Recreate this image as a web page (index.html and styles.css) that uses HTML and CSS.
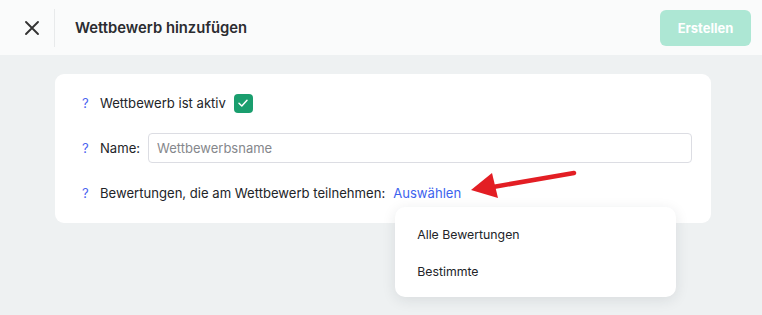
FILE: index.html
```html
<!doctype html>
<html lang="de">
  <head>
    <meta charset="UTF-8" />
    <meta name="viewport" content="width=device-width, initial-scale=1.0" />
    <title>Wettbewerb hinzufügen</title>
    <link rel="stylesheet" href="styles.css">
  </head>
  <body>
    <div class="top-bar">
      <div class="close-wrap">
        <button class="close-btn" aria-label="Schließen">
          <svg width="16" height="16" viewBox="0 0 16 16">
            <path d="M2 2 L14 14 M14 2 L2 14" stroke="#333" stroke-width="1.9" stroke-linecap="round" fill="none" />
          </svg>
        </button>
      </div>
      <div class="page-title">Wettbewerb hinzufügen</div>
      <button class="create-btn" disabled>Erstellen</button>
    </div>

    <div class="content">
      <div class="form-card">
        <div class="form-row">
          <span class="hint">?</span>
          <span class="label">Wettbewerb ist aktiv</span>
          <span class="checkbox">
            <svg width="12" height="12" viewBox="0 0 12 12">
              <path d="M2 6.3 L4.8 9 L10 3.2" stroke="#fff" stroke-width="1.5" stroke-linecap="round" stroke-linejoin="round" fill="none" />
            </svg>
          </span>
        </div>

        <div class="form-row">
          <span class="hint">?</span>
          <span class="label">Name:</span>
          <input class="text-input" type="text" placeholder="Wettbewerbsname" />
        </div>

        <div class="form-row">
          <span class="hint">?</span>
          <span class="label">Bewertungen, die am Wettbewerb teilnehmen:</span>
          <span class="picker">
            <a class="link" href="#">Auswählen</a>
            <svg class="arrow" width="106" height="32" viewBox="0 0 106 32">
              <path d="M103 4 L22 18" stroke="#e31e24" stroke-width="4.5" stroke-linecap="round" fill="none" />
              <path d="M0 21 L21 4 L27 29 Z" fill="#e31e24" />
            </svg>
            <div class="dropdown">
              <div class="dropdown-item">Alle Bewertungen</div>
              <div class="dropdown-item">Bestimmte</div>
            </div>
          </span>
        </div>
      </div>
    </div>
  </body>
</html>
```

FILE: styles.css
```css
body {
  margin: 0;
  font-family: 'Inter', 'Noto Sans', sans-serif;
  background-color: #eef1f2;
  color: #222428;
  height: 315px;
  overflow: hidden;
}

/* Top bar */
.top-bar {
  display: flex;
  align-items: center;
  height: 55px;
  background-color: #fafbfb;
}

.close-wrap {
  width: 55px;
  height: 38px;
  border-right: 1px solid #e8eaeb;
  box-sizing: border-box;
  display: flex;
  align-items: center;
  padding-left: 24px;
}

.close-btn {
  background: none;
  border: none;
  padding: 0;
  width: 16px;
  height: 16px;
  display: flex;
  cursor: pointer;
}

.page-title {
  margin-left: 20px;
  font-size: 14.8px;
  font-weight: 600;
  color: #2a2c30;
}

.create-btn {
  margin-left: auto;
  margin-right: 11px;
  width: 91px;
  height: 36px;
  border: none;
  border-radius: 6px;
  background-color: #ade7d4;
  color: #fff;
  font-family: inherit;
  font-size: 13px;
  font-weight: 700;
}

/* Content */
.content {
  padding: 19px 0 0 55px;
}

.form-card {
  width: 656px;
  box-sizing: border-box;
  background-color: #fff;
  border-radius: 9px;
  padding: 19px 19px 20px 27px;
  display: flex;
  flex-direction: column;
  gap: 20px;
}

.form-row {
  display: flex;
  align-items: center;
  font-size: 13.1px;
  min-height: 20px;
}

.hint {
  width: 18px;
  color: #4a63f0;
}

.label {
  margin-right: 8px;
}

.checkbox {
  width: 19px;
  height: 19px;
  border-radius: 4px;
  background-color: #1a9e6e;
  display: flex;
  align-items: center;
  justify-content: center;
}

.text-input {
  flex: 1;
  height: 30px;
  box-sizing: border-box;
  border: 1px solid #dcdde3;
  border-radius: 4px;
  padding: 0 8px;
  font-family: inherit;
  font-size: 13px;
  color: #222;
}

.text-input::placeholder {
  color: #85878c;
}

.picker {
  position: relative;
}

.link {
  color: #3d63ee;
  text-decoration: none;
}

.arrow {
  position: absolute;
  left: calc(100% + 10px);
  top: -16px;
}

.dropdown {
  position: absolute;
  left: 2px;
  top: 22px;
  width: 281px;
  box-sizing: border-box;
  padding: 9px 0 7px;
  background-color: #fff;
  border-radius: 10px;
  box-shadow: 0 3px 14px rgba(30, 40, 50, 0.1);
  z-index: 2;
}

.dropdown-item {
  height: 37px;
  line-height: 37px;
  padding-left: 22px;
  font-size: 12.3px;
  color: #222428;
}
```
